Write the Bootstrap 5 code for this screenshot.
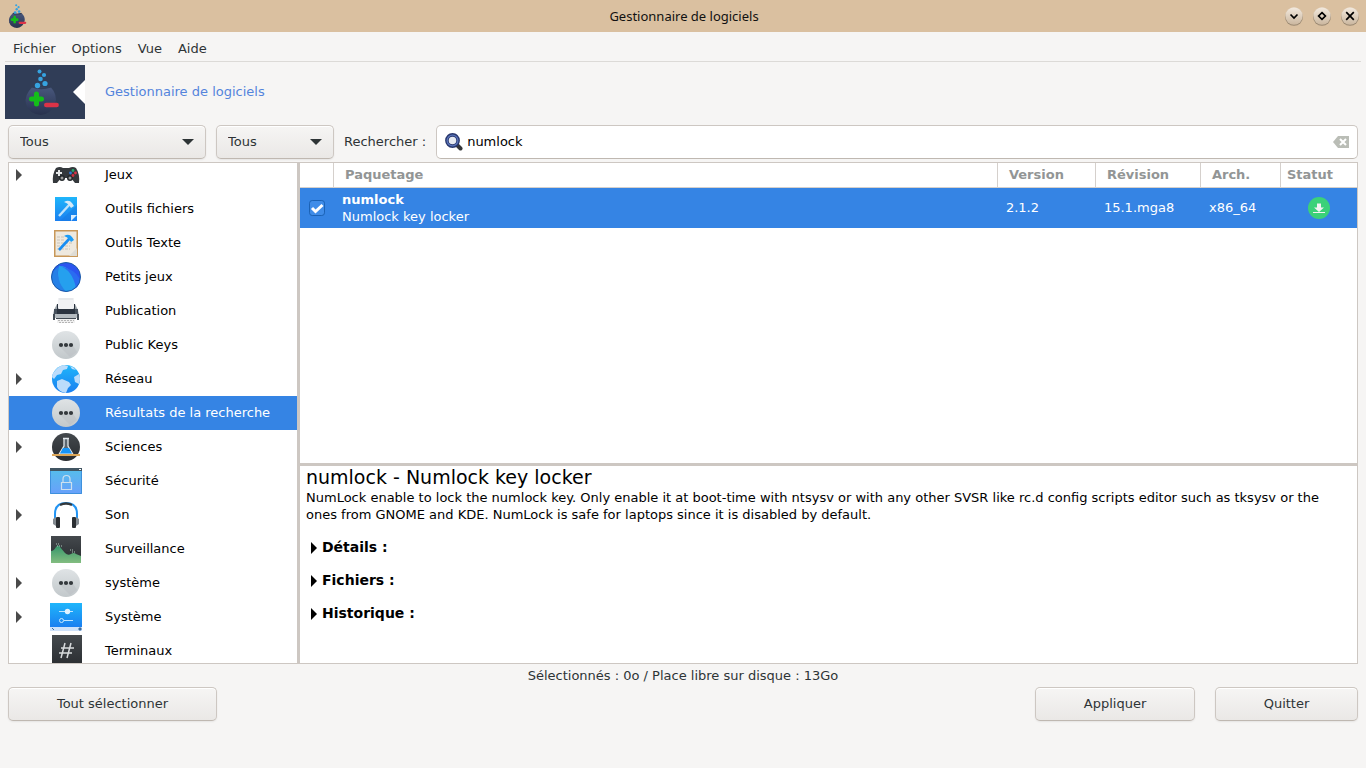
<!DOCTYPE html>
<html lang="fr">
<head>
<meta charset="utf-8">
<meta name="viewport" content="width=device-width, initial-scale=1">
<title>Gestionnaire de logiciels</title>
<link href="https://cdn.jsdelivr.net/npm/bootstrap@5.3.0/dist/css/bootstrap.min.css" rel="stylesheet">
<style>
  :root { --edge: #cdc7c2; --ink: #2e3436; --accent: #3584e4; }
  body { font: 13px/17px "DejaVu Sans", sans-serif; background: #f6f5f4; color: var(--ink); padding-bottom: 47px; }
  svg { display: block; flex: none; }
  .titlebar { background: #dac0a0; height: 32px; padding: 0 6px 0 8px; color: #111; font: 13px/18px "Noto Sans", sans-serif; }
  .titlebar > div { flex: 1 1 0; }
  .win-btn { border: 0; background: none; padding: 0; }
  .menubar { margin: 0 5px; padding-top: 4px; border-bottom: 1px solid #dcdad7; }
  .menubar a { color: var(--ink); padding: 4px 8px; }
  .banner { padding: 3px 5px 6px; color: #5484dc; }
  .banner span { padding-bottom: 2px; }
  .filters { gap: 10px; }
  .filters label { padding-bottom: 2px; }
  .gtk { height: 34px; border: 1px solid var(--edge); border-bottom-color: #bfb8b1; border-radius: 5px; font-size: 13px; line-height: 17px; color: var(--ink); }
  .gtk-btn { background-color: #f0efee; background-image: linear-gradient(#f6f5f4, #eae8e6); box-shadow: inset 0 1px #fff, 0 1px 2px rgba(0,0,0,.07); padding: 0 0 2px; }
  .gtk-select { padding: 0 30px 2px 11px; box-shadow: inset 0 1px #fff, 0 1px 2px rgba(0,0,0,.07);
    background-image: url("data:image/svg+xml,%3Csvg xmlns='http://www.w3.org/2000/svg' width='12' height='6'%3E%3Cpath d='M0 0h12L6 6z' fill='%232e3436'/%3E%3C/svg%3E"), linear-gradient(#f6f5f4, #eae8e6);
    background-size: 12px 6px, 100% 100%; background-position: right 11px center, 0 0; background-repeat: no-repeat; }
  .w-kind { width: 198px; } .w-mode { width: 118px; }
  .w-all { width: 209px; } .w-apply { width: 160px; } .w-quit { width: 143px; }
  .search { background: #fff; padding: 0 8px; }
  .search input { border: 0; outline: 0; background: none; padding: 0 0 2px; color: #000; min-width: 0; }
  .panes { margin: 3px 8px 0; border: 1px solid var(--edge); background: #fff; color: #000; min-height: 0; }
  .tree { flex: 0 0 291px; border-right: 3px solid var(--edge); min-height: 0; }
  .tree a { display: flex; flex: none; align-items: center; height: 34px; color: #000; text-decoration: none; padding-left: 7px; }
  .tree a.chosen { background: var(--accent); color: #fff; }
  .tree .twist { width: 34px; }
  .tree .name { margin-left: 23px; padding-bottom: 2px; }
  .packages { flex: 0 1 303px; min-height: 0; border-bottom: 3px solid var(--edge); }
  .pkg { table-layout: fixed; width: 100%; border-collapse: separate; border-spacing: 0; }
  .pkg th { height: 25px; padding: 0 0 2px 11px; color: #929595; border-right: 1px solid #d5d0cc; border-bottom: 1px solid #d5d0cc; }
  .pkg th:last-child { border-right: 0; padding-left: 6px; }
  .pkg td { height: 40px; padding: 0 8px 1px; background: var(--accent); color: #fff; }
  .pkg td:first-child { padding-left: 9px; }
  .c-tick { width: 34px; } .c-ver { width: 98px; } .c-rev { width: 105px; } .c-arch { width: 80px; } .c-stat { width: 76px; }
  .tick { width: 16px; height: 16px; margin: 0; float: none; border: 1px solid #1b62b5; border-radius: 3px; }
  .tick:checked { background-color: #3f8ce8; border-color: #1b62b5; background-size: 16px 16px;
    background-image: url("data:image/svg+xml,%3Csvg xmlns='http://www.w3.org/2000/svg' viewBox='0 0 16 16'%3E%3Cpath d='M3 8l3.5 3.5L13.5 5' fill='none' stroke='white' stroke-width='3'/%3E%3C/svg%3E"); }
  .info { padding: 0 6px; }
  .info h1 { font-size: 19px; line-height: 23px; font-weight: 400; margin: 0; }
  .info details { margin-top: 16px; padding-left: 5px; font-size: 14px; font-weight: 700; }
  .info summary { display: flex; align-items: center; gap: 5px; }
  .status { padding: 3px 8px; text-align: center; }
</style>
</head>
<body class="d-flex flex-column vh-100">

<svg width="0" height="0" class="position-absolute" aria-hidden="true">
  <defs>
    <linearGradient id="blue" x2="0" y2="1"><stop stop-color="#1fb6fb"/><stop offset="1" stop-color="#1a7ff0"/></linearGradient>
    <linearGradient id="dark" x2="0" y2="1"><stop stop-color="#44494d"/><stop offset="1" stop-color="#292c30"/></linearGradient>
    <linearGradient id="grey" x2="0" y2="1"><stop stop-color="#dfe3e5"/><stop offset="1" stop-color="#c2c8cb"/></linearGradient>
    <linearGradient id="sky" x2="0" y2="1"><stop stop-color="#54bfea"/><stop offset="1" stop-color="#69a0fb"/></linearGradient>
    <linearGradient id="green" x2="0" y2="1"><stop stop-color="#35966b"/><stop offset="1" stop-color="#83bd80"/></linearGradient>
    <linearGradient id="pot" x2="0" y2="1"><stop stop-color="#48577c"/><stop offset="1" stop-color="#28324e"/></linearGradient>
    <linearGradient id="knob" x2="0" y2="1"><stop stop-color="#f3eadf"/><stop offset="1" stop-color="#cbb79f"/></linearGradient>
    <symbol id="i-dots" viewBox="0 0 32 32"><circle cx="16" cy="16" r="14" fill="url(#grey)"/><path d="M10 18l10 10 7-5-5-8z" fill="#b7bdc1" opacity=".45"/><g fill="#33383c"><circle cx="11" cy="16" r="2.1"/><circle cx="16" cy="16" r="2.1"/><circle cx="21" cy="16" r="2.1"/></g></symbol>
    <symbol id="i-right" viewBox="0 0 6 12"><path d="M0 0l6 6-6 6z" fill="currentColor"/></symbol>
    <symbol id="i-flask" viewBox="0 0 36 46">
      <path d="M8 18.500H27Q34 26 31 35Q27 45 17 46Q5 45 2 35Q0 26 8 18.500Z" fill="url(#pot)"/>
      <path d="M8 18.500Q17 22 27 18.500L25 17Q17 20 10 17Z" fill="#313e59"/>
      <g fill="#36a3e0"><circle cx="15.500" cy="2.500" r="2"/><circle cx="20" cy="6" r="2.100"/><circle cx="16.500" cy="10" r="2.300"/><circle cx="13.500" cy="16.500" r="2.700"/><circle cx="21" cy="14.500" r="2.600"/></g>
      <path d="M12.500 25v10M7.500 30h10" stroke="#14bd1a" stroke-width="5" stroke-linecap="round"/>
      <path d="M22.200 36h10.500" stroke="#dc3347" stroke-width="4.400" stroke-linecap="round"/>
    </symbol>
  </defs>
</svg>

<header class="titlebar d-flex align-items-center flex-shrink-0">
  <div><svg width="19" height="24"><use href="#i-flask"/></svg></div>
  <span>Gestionnaire de logiciels</span>
  <div class="d-flex justify-content-end gap-2">
    <button class="win-btn" type="button" aria-label="Réduire"><svg width="20" height="20" viewBox="0 0 20 20"><circle cx="10" cy="10.800" r="9" fill="#9a8872"/><circle cx="10" cy="10" r="8.700" fill="url(#knob)"/><path d="M6.500 8.500L10 12l3.500-3.500" fill="none" stroke="#000" stroke-width="1.700"/></svg></button>
    <button class="win-btn" type="button" aria-label="Agrandir"><svg width="20" height="20" viewBox="0 0 20 20"><circle cx="10" cy="10.800" r="9" fill="#9a8872"/><circle cx="10" cy="10" r="8.700" fill="url(#knob)"/><path d="M10 6.600L13.400 10 10 13.400 6.600 10z" fill="none" stroke="#000" stroke-width="1.700"/></svg></button>
    <button class="win-btn" type="button" aria-label="Fermer"><svg width="20" height="20" viewBox="0 0 20 20"><circle cx="10" cy="10.800" r="9" fill="#9a8872"/><circle cx="10" cy="10" r="8.700" fill="url(#knob)"/><path d="M6.200 6.200l7.600 7.600M13.800 6.200L6.200 13.800" stroke="#000" stroke-width="1.700"/></svg></button>
  </div>
</header>

<nav class="menubar d-flex">
  <a class="text-decoration-none" href="#">Fichier</a>
  <a class="text-decoration-none" href="#">Options</a>
  <a class="text-decoration-none" href="#">Vue</a>
  <a class="text-decoration-none" href="#">Aide</a>
</nav>

<div class="banner d-flex align-items-center">
  <svg width="80" height="54" viewBox="0 0 80 54"><rect width="80" height="54" fill="#303d57"/><path d="M80 15v24L68 27z" fill="#fff"/><use href="#i-flask" x="19" y="4" width="36" height="46"/></svg>
  <span class="ms-3 ps-1">Gestionnaire de logiciels</span>
</div>

<form class="filters d-flex align-items-center px-2">
  <select class="form-select gtk gtk-select w-kind" aria-label="Type"><option>Tous</option></select>
  <select class="form-select gtk gtk-select w-mode" aria-label="Filtre"><option>Tous</option></select>
  <label for="q">Rechercher :</label>
  <div class="gtk search d-flex align-items-center flex-grow-1">
    <svg width="18" height="18" viewBox="0 0 18 18"><path d="M12 12l3.500 3.500" stroke="#34363a" stroke-width="4" stroke-linecap="round"/><circle cx="7.500" cy="7.500" r="5.600" fill="#e6eaf2" stroke="#28376d" stroke-width="3.600"/><circle cx="7.500" cy="7.500" r="5.400" fill="none" stroke="#5973b8" stroke-width="1.300"/></svg>
    <input id="q" type="text" class="flex-grow-1 ms-1" value="numlock">
    <button class="win-btn" type="button" aria-label="Effacer"><svg width="16" height="12" viewBox="0 0 16 12"><path d="M0 6l5-6h11v12H5z" fill="#babdb6"/><path d="M7 3l6 6M13 3L7 9" stroke="#fff" stroke-width="2"/></svg></button>
  </div>
</form>

<main class="panes d-flex flex-grow-1">
  <nav class="tree d-flex flex-column justify-content-center overflow-hidden" aria-label="Groupes">
    <a href="#"><span class="twist"><svg width="6" height="12" color="#4a4a4a"><use href="#i-right"/></svg></span>
      <svg width="32" height="32" viewBox="0 0 32 32"><path d="M6 9Q10 7 13 9h6q4-2 7 0Q30 15 29 24h-4l-4-5H11l-4 5H3Q2 15 6 9z" fill="#34383c"/><circle cx="12" cy="19" r="3" fill="#24282b"/><circle cx="20" cy="19" r="3" fill="#24282b"/><circle cx="12" cy="19" r="1.500" fill="#999"/><circle cx="20" cy="19" r="1.500" fill="#999"/><path d="M9 11v6M6 14h6" stroke="#e5e7e8" stroke-width="2"/><circle cx="23" cy="11.500" r="1.400" fill="#22a86b"/><circle cx="20.500" cy="14" r="1.400" fill="#3178dc"/><circle cx="25.500" cy="14" r="1.400" fill="#de3347"/><circle cx="23" cy="16.500" r="1.400" fill="#d02d41"/></svg><span class="name">Jeux</span></a>
    <a href="#"><span class="twist"></span>
      <svg width="32" height="32" viewBox="0 0 32 32"><path d="M5 4h22v24H5z" fill="url(#blue)"/><path d="M27 12v10h-6v6H10z" fill="#1575df" opacity=".4"/><path d="M21 28v-6h6z" fill="#d7edff"/><path d="M9 23L20 11" stroke="#bfe2fb" stroke-width="2.400"/><path d="M14 9q5-3 8 1l2 3-3 2-2-3q-2-2-5-3z" fill="#d5eaf8"/></svg><span class="name">Outils fichiers</span></a>
    <a href="#"><span class="twist"></span>
      <svg width="32" height="32" viewBox="0 0 32 32"><path d="M4 3h24v27H4z" fill="#c89859"/><path d="M5.500 4.500h21v24h-21z" fill="#eee9df"/><path d="M7 10h8M7 13h7M7 16h16M7 19h13M7 22h13" stroke="#c9c3b8" stroke-dasharray="3 1"/><path d="M27 21v8h-8z" fill="#dedcd5"/><path d="M9 23L20 11" stroke="#178df2" stroke-width="2.600"/><path d="M14 9q5-3 8 1l2 3-3 2-2-3q-2-2-5-3z" fill="#1b9df7"/></svg><span class="name">Outils Texte</span></a>
    <a href="#"><span class="twist"></span>
      <svg width="32" height="32" viewBox="0 0 32 32"><circle cx="16" cy="16" r="14.500" fill="#2b55ef"/><path d="M10 3Q1 8 1.500 16Q2 29 18 30.500Q3 17 10 3z" fill="#2680e6"/><path d="M9 5Q21 4 27 24Q23 30 16 30.500Q5 19 9 5z" fill="#25a0ee"/><path d="M9 5Q25 8 30 18Q30 24 26 27Q22 8 9 5z" fill="#2a6cf0"/><path d="M8.500 6Q3 9 3 13 2 8 9 3z" fill="#2b55ef"/><circle cx="16" cy="16" r="14.500" fill="none" stroke="#1a5ba7"/></svg><span class="name">Petits jeux</span></a>
    <a href="#"><span class="twist"></span>
      <svg width="32" height="32" viewBox="0 0 32 32"><path d="M4 15l3-6h18l3 6 1 5H3z" fill="#9aa3a9"/><path d="M7 9h18v10H7z" fill="#2b3440"/><path d="M8 3h16v10q0 1-1 1H9q-1 0-1-1z" fill="#f1f2f4"/><path d="M9 4h14" stroke="#dcdfe2"/><path d="M4 14h3v5h18v-5h3v6H4z" fill="#46505b"/><path d="M3 19h26v4H3z" fill="#b4bbc0"/><path d="M3 19h2v6H3zM27 19h2v6h-2zM6 23h20v1H6z" fill="#414a53"/><path d="M7 24h18v4H7z" fill="#f0f0f0"/><path d="M8 25.500h16M9 27.500h14" stroke="#b5b5b5" stroke-dasharray="2 1"/></svg><span class="name">Publication</span></a>
    <a href="#"><span class="twist"></span><svg width="32" height="32"><use href="#i-dots"/></svg><span class="name">Public Keys</span></a>
    <a href="#"><span class="twist"><svg width="6" height="12" color="#4a4a4a"><use href="#i-right"/></svg></span>
      <svg width="32" height="32" viewBox="0 0 32 32"><circle cx="16" cy="16" r="14" fill="url(#blue)"/><path d="M4 9Q8 3 14 2l4 1-1 3-4 1-2 4-4 1-3 4-2-2Q2 11 4 9zM7 18l5-2 7 3 2 3-3 3-2 5Q9 29 7 24zM29 11q2 5 0 10l-4-2-1-5zM20 3q4 1 6 4l-4-1z" fill="#bbdcfb"/></svg><span class="name">Réseau</span></a>
    <a href="#" class="chosen" aria-current="true"><span class="twist"></span><svg width="32" height="32"><use href="#i-dots"/></svg><span class="name">Résultats de la recherche</span></a>
    <a href="#"><span class="twist"><svg width="6" height="12" color="#4a4a4a"><use href="#i-right"/></svg></span>
      <svg width="32" height="32" viewBox="0 0 32 32"><circle cx="16" cy="16" r="14" fill="url(#dark)"/><path d="M13 7.500h6M14 8v7L9.500 22.500h13L18 15V8" fill="#5b666f" stroke="#e2e8ec" stroke-width="1.300"/><path d="M13 17h6l3 5.500H10z" fill="#1694f8"/><path d="M2 23h28v2H2z" fill="#dca658"/></svg><span class="name">Sciences</span></a>
    <a href="#"><span class="twist"></span>
      <svg width="32" height="32" viewBox="0 0 32 32"><path d="M0 3h32v26H0z" fill="url(#sky)"/><path d="M0 3h32v3H0z" fill="#415562"/><path d="M29 4h2v1h-2z" fill="#fff"/><path d="M.5 6v22.500h31V6" fill="none" stroke="#3e91dd"/><path d="M11.500 17.500h10v7h-10zM13 17v-3q0-3.500 3.500-3.500T20 14v3" fill="none" stroke="#cce0ef" stroke-width="1.200"/></svg><span class="name">Sécurité</span></a>
    <a href="#"><span class="twist"><svg width="6" height="12" color="#4a4a4a"><use href="#i-right"/></svg></span>
      <svg width="32" height="32" viewBox="0 0 32 32"><path d="M5 20v-5Q5 4 16 4t11 11v5" fill="none" stroke="#2294f3" stroke-width="2"/><path d="M10 6q6-3 12 0" fill="none" stroke="#33383c" stroke-width="2.400"/><path d="M3 20l3-2v9l-3-2zM29 20l-3-2v9l3-2z" fill="#848b91"/><rect x="6" y="18" width="4" height="11" rx="1" fill="#2b2f33"/><rect x="22" y="18" width="4" height="11" rx="1" fill="#2b2f33"/></svg><span class="name">Son</span></a>
    <a href="#"><span class="twist"></span>
      <svg width="32" height="32" viewBox="0 0 32 32"><path d="M1 3h30v26H1z" fill="url(#dark)"/><path d="M1 18q3 0 5-4 2-3 4 0l5 6q3 3 6 1 3-2 5 0l5 2v7H1z" fill="url(#green)"/><path d="M6 11h4M7 13h5M20 17h4M22 19h4" stroke="#aec4bb" stroke-dasharray="1 1"/></svg><span class="name">Surveillance</span></a>
    <a href="#"><span class="twist"><svg width="6" height="12" color="#4a4a4a"><use href="#i-right"/></svg></span><svg width="32" height="32"><use href="#i-dots"/></svg><span class="name">système</span></a>
    <a href="#"><span class="twist"><svg width="6" height="12" color="#4a4a4a"><use href="#i-right"/></svg></span>
      <svg width="32" height="32" viewBox="0 0 32 32"><path d="M0 2h32v24H0z" fill="url(#blue)"/><path d="M0 26h32v4H0z" fill="#cfe2fa"/><path d="M2 27l2 2M29 27h2v2h-2z" stroke="#3d6c9d" fill="#3d6c9d"/><path d="M9 10.500h14M14 19.500h9" stroke="#bfe5ff"/><circle cx="17.500" cy="10.500" r="2.700" fill="#e2f3ff"/><circle cx="11.500" cy="19.500" r="2" fill="none" stroke="#c8e8ff"/></svg><span class="name">Système</span></a>
    <a href="#"><span class="twist"></span>
      <svg width="32" height="32" viewBox="0 0 32 32"><path d="M2 0h30v32H2z" fill="url(#dark)"/><path d="M15 8l-4 15M21 8l-4 15M11 13h13M9 18h13" stroke="#d8dbdd" stroke-width="1.500"/></svg><span class="name">Terminaux</span></a>
  </nav>

  <section class="d-flex flex-column flex-grow-1">
    <div class="packages">
      <table class="pkg">
        <colgroup><col class="c-tick"><col><col class="c-ver"><col class="c-rev"><col class="c-arch"><col class="c-stat"></colgroup>
        <thead><tr><th></th><th>Paquetage</th><th>Version</th><th>Révision</th><th>Arch.</th><th>Statut</th></tr></thead>
        <tbody><tr>
          <td><input class="form-check-input tick d-block" type="checkbox" checked aria-label="numlock"></td>
          <td><b>numlock</b><br>Numlock key locker</td>
          <td>2.1.2</td><td>15.1.mga8</td><td>x86_64</td>
          <td><svg class="mx-auto" width="22" height="22" viewBox="0 0 22 22" role="img" aria-label="Installé"><circle cx="11" cy="11" r="11" fill="#3bd179"/><path d="M9 6.500h4v4h3l-5 4.500-5-4.500h3zM5 15h12v1H5z" fill="#f2f2f2"/></svg></td>
        </tr></tbody>
      </table>
    </div>
    <article class="info">
      <h1>numlock - Numlock key locker</h1>
      <p class="mb-0">NumLock enable to lock the numlock key. Only enable it at boot-time with ntsysv or with any other SVSR like rc.d config scripts editor such as tksysv or the ones from GNOME and KDE. NumLock is safe for laptops since it is disabled by default.</p>
      <details><summary><svg width="6" height="12"><use href="#i-right"/></svg>Détails :</summary></details>
      <details><summary><svg width="6" height="12"><use href="#i-right"/></svg>Fichiers :</summary></details>
      <details><summary><svg width="6" height="12"><use href="#i-right"/></svg>Historique :</summary></details>
    </article>
  </section>
</main>

<div class="status">Sélectionnés : 0o / Place libre sur disque : 13Go</div>
<footer class="d-flex px-2">
  <button type="button" class="gtk gtk-btn w-all me-auto">Tout sélectionner</button>
  <button type="button" class="gtk gtk-btn w-apply me-3">Appliquer</button>
  <button type="button" class="gtk gtk-btn w-quit ms-1">Quitter</button>
</footer>
<script src="https://cdn.jsdelivr.net/npm/bootstrap@5.3.0/dist/js/bootstrap.bundle.min.js"></script>
</body>
</html>
